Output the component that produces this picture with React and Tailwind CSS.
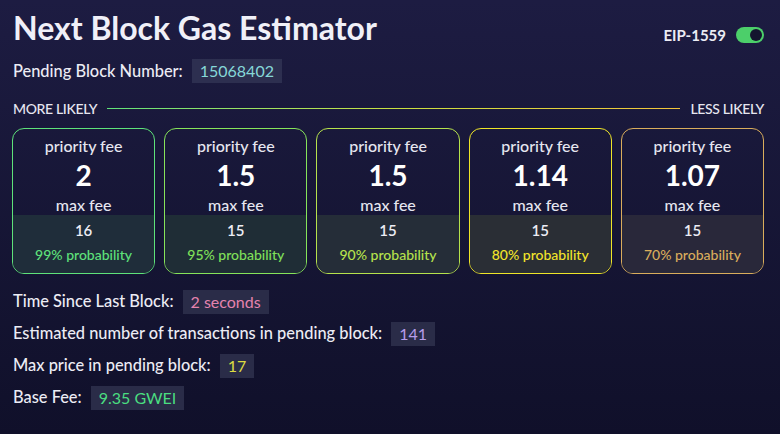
const estimates = [
  { priority: '2', max: '16', pct: 99, border: 'border-[#5ee27a]', text: 'text-[#5ee27a]', tint: 'bg-[#1f2d3a]' },
  { priority: '1.5', max: '15', pct: 95, border: 'border-[#86e45a]', text: 'text-[#7fe05a]', tint: 'bg-[#1f2d36]' },
  { priority: '1.5', max: '15', pct: 90, border: 'border-[#b6e24c]', text: 'text-[#b6e24c]', tint: 'bg-[#252d38]' },
  { priority: '1.14', max: '15', pct: 80, border: 'border-[#eee528]', text: 'text-[#f2e52a]', tint: 'bg-[#2a2e35]' },
  { priority: '1.07', max: '15', pct: 70, border: 'border-[#d9ad5c]', text: 'text-[#d9ad5c]', tint: 'bg-[#29283a]' },
];

function EstimateCard({ e }) {
  return (
    <div className={`flex-1 border ${e.border} rounded-xl overflow-hidden flex flex-col text-center`}>
      <div className="pt-[7px] flex flex-col items-center">
        <span className="text-[16px] leading-[20px] font-medium text-[#e6e6f0]">priority fee</span>
        <span className="text-[28px] leading-[32px] font-bold text-white mt-[3px]">{e.priority}</span>
        <span className="text-[16px] leading-[20px] font-medium text-[#e6e6f0] mt-[4px]">max fee</span>
      </div>
      <div className={`${e.tint} flex-1 flex flex-col items-center pt-[5px]`}>
        <span className="text-[15px] leading-[20px] font-semibold text-[#ececf4]">{e.max}</span>
        <span className={`text-[14px] leading-[18px] font-medium ${e.text} mt-[6px]`}>{e.pct}% probability</span>
      </div>
    </div>
  );
}

function Row({ label, value, color }) {
  return (
    <div className="flex items-center gap-[9px] h-[24px]">
      <span className="text-[16.4px] font-medium text-[#ececf4]">{label}</span>
      <span className={`bg-[#2a2c48] px-[8px] h-[24px] flex items-center text-[16px] ${color}`}>{value}</span>
    </div>
  );
}

export default function App() {
  return (
    <div
      className="w-[780px] h-[434px] bg-gradient-to-b from-[#1d1c42] to-[#10102a] text-white pl-[12px] pr-[16px] pt-[8px] overflow-hidden"
      style={{ fontFamily: 'Lato, "Noto Sans", sans-serif' }}
    >
      <div className="flex items-start justify-between">
        <h1 className="text-[32px] leading-[40px] font-bold text-[#f0f0f8] ml-[1px]">Next Block Gas Estimator</h1>
        <div className="flex items-center gap-[10px] mt-[16px]">
          <span className="text-[15px] font-bold text-[#ececf4]">EIP-1559</span>
          <div className="w-[28px] h-[16px] rounded-full bg-[#4ccf6a] flex items-center justify-end pr-[2px]">
            <div className="w-[12px] h-[12px] rounded-full bg-[#14142e]" />
          </div>
        </div>
      </div>

      <div className="flex items-center gap-[9px] mt-[11px] ml-[1px]">
        <span className="text-[16.4px] font-medium text-[#ececf4]">Pending Block Number:</span>
        <span className="bg-[#2d2f50] px-[8px] h-[24px] flex items-center text-[16px] text-[#86d8d8]">15068402</span>
      </div>

      <div className="flex items-center gap-[10px] mt-[14px] ml-[1px]">
        <span className="text-[14px] font-medium tracking-tight text-[#e6e6f0]">MORE LIKELY</span>
        <div className="flex-1 h-[1px] bg-gradient-to-r from-[#5ee27a] via-[#c8e040] to-[#f2c43a]" />
        <span className="text-[14px] font-medium tracking-tight text-[#e6e6f0]">LESS LIKELY</span>
      </div>

      <div className="flex gap-[9px] mt-[9px] h-[146px]">
        {estimates.map((e, i) => (
          <EstimateCard key={i} e={e} />
        ))}
      </div>

      <div className="flex flex-col gap-[8px] mt-[16px] ml-[1px]">
        <Row label="Time Since Last Block:" value="2 seconds" color="text-[#e583ae]" />
        <Row label="Estimated number of transactions in pending block:" value="141" color="text-[#b59ceb]" />
        <Row label="Max price in pending block:" value="17" color="text-[#dcdc42]" />
        <Row label="Base Fee:" value="9.35 GWEI" color="text-[#4ade80]" />
      </div>
    </div>
  );
}
